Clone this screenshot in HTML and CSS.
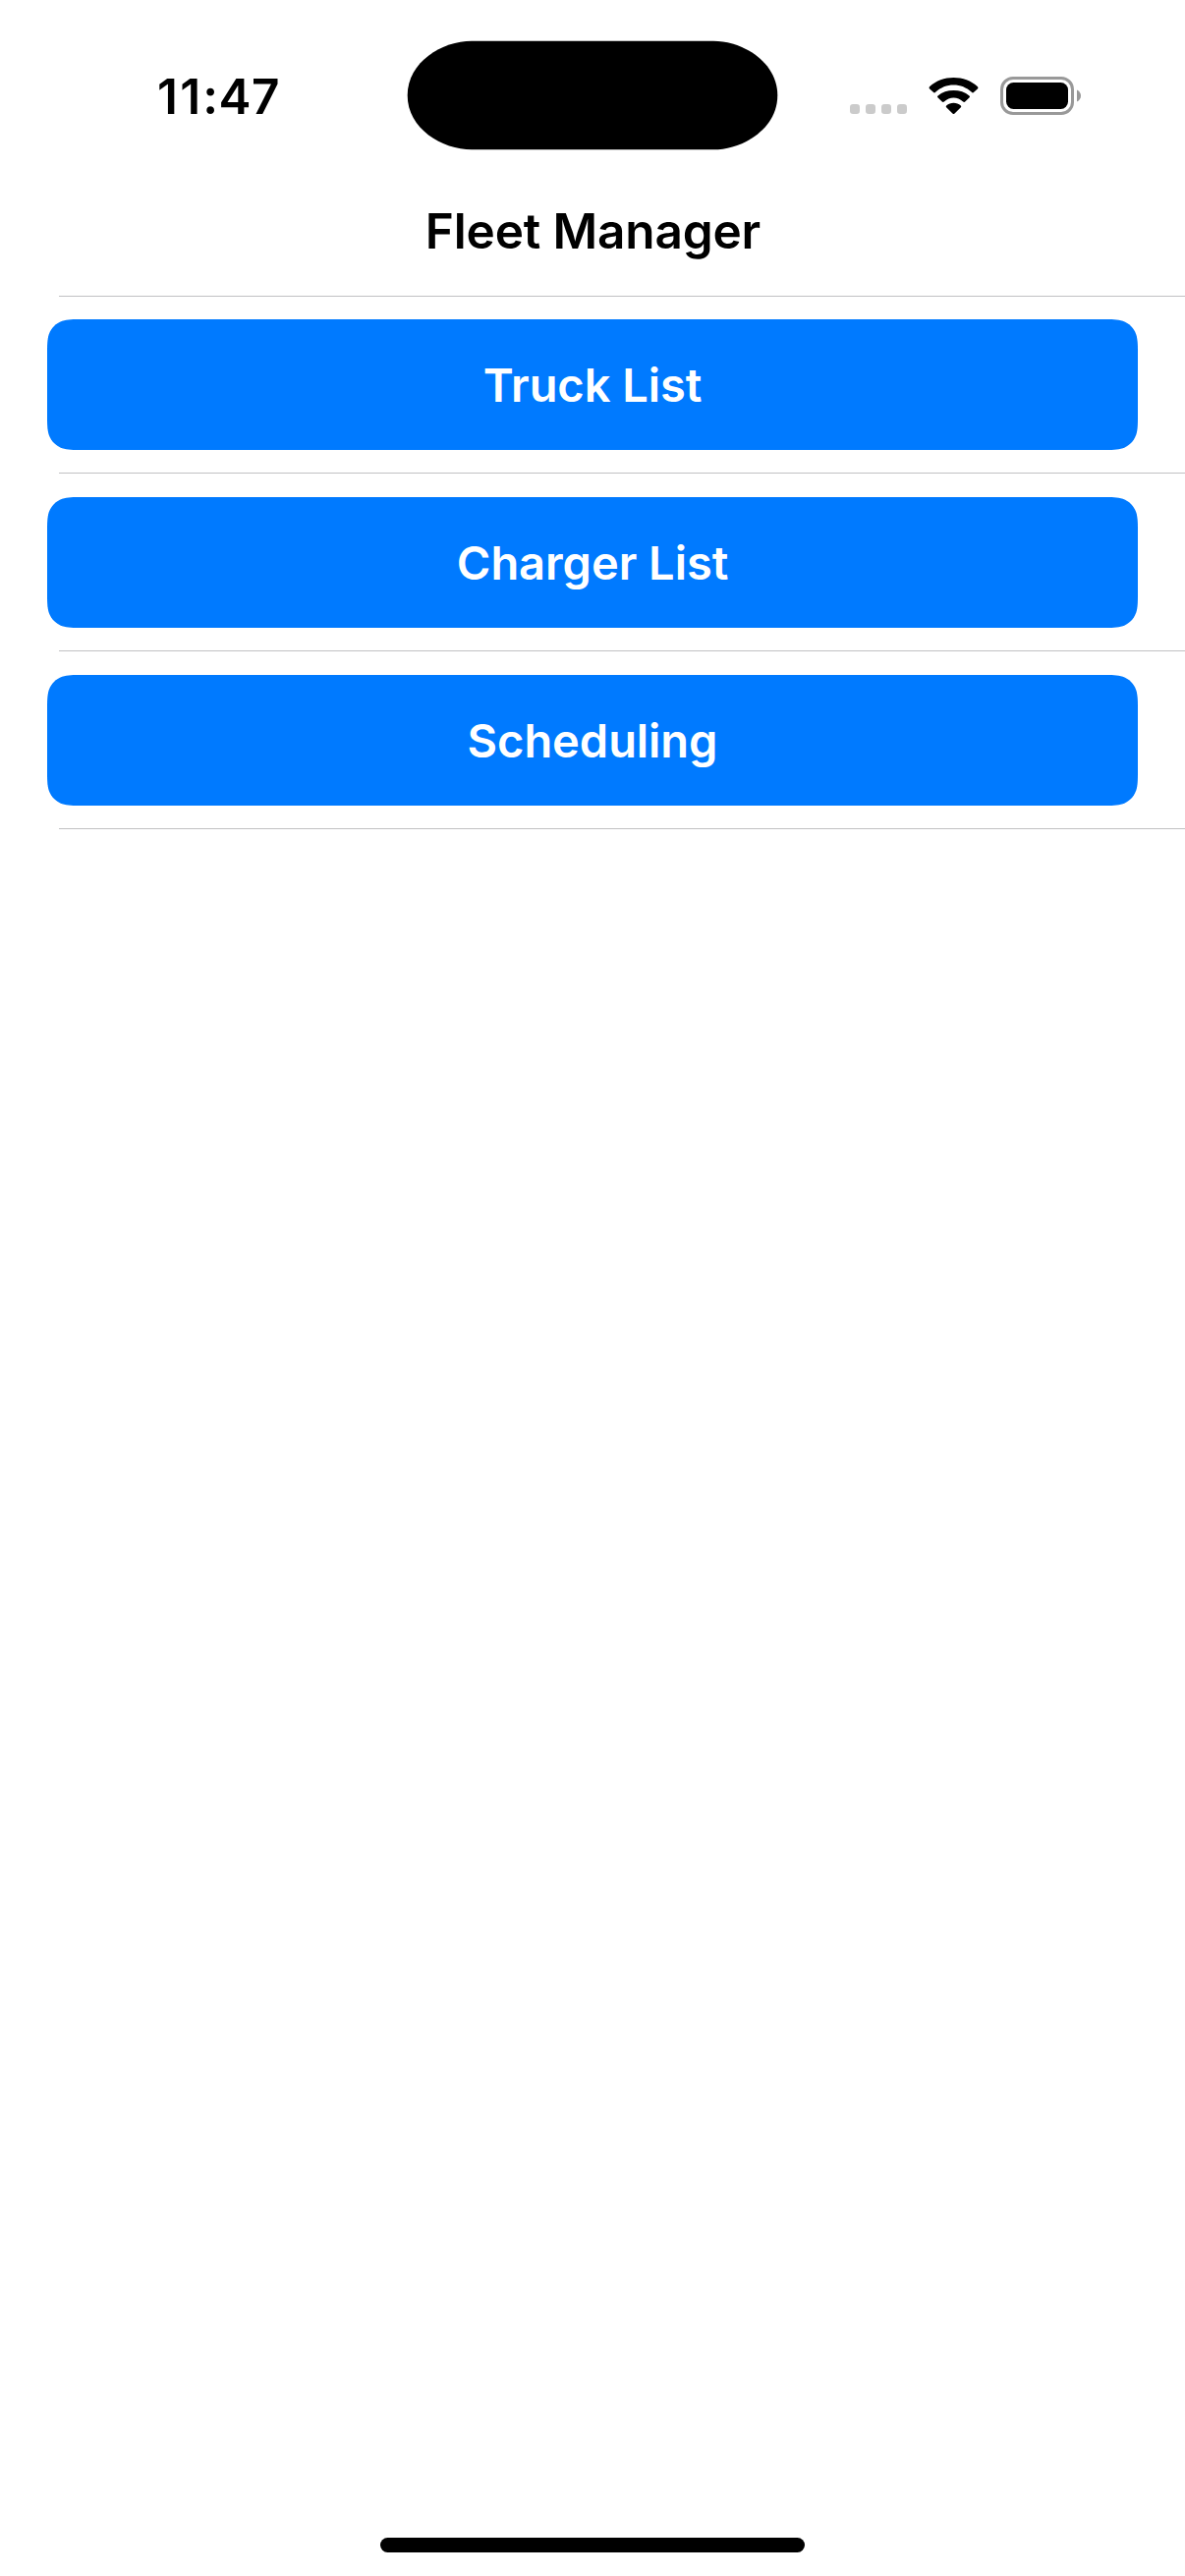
FILE: index.html
```html
<!DOCTYPE html>
<html lang="en">
<head>
<meta charset="utf-8">
<title>Fleet Manager</title>
<link rel="stylesheet" href="styles.css">
</head>
<body>
<div class="screen">
  <header class="status-bar">
    <div class="time"><span class="hour">11</span>:47</div>
    <svg class="island" viewBox="0 0 378 112" aria-hidden="true">
      <path d="M66 .7H312C342 .7 377.3 22 377.3 56S342 111.3 312 111.3H66C36 111.3.7 90 .7 56S36 .7 66 .7Z"/>
    </svg>
    <div class="indicators">
      <svg class="cellular" viewBox="0 0 58 10" aria-hidden="true">
        <rect width="10" height="10" rx="3.2"/><rect x="16" width="10" height="10" rx="3.2"/><rect x="32" width="10" height="10" rx="3.2"/><rect x="48" width="10" height="10" rx="3.2"/>
      </svg>
      <svg class="wifi" viewBox="0 0 51 38" aria-hidden="true">
        <path d="M25.5 7.400C32.400 7.400 38.800 10 43.600 14.500Q44.900 16.100 45.900 15.100L50.100 11.200Q50.900 10.300 50 9.300C43.200 3 34.800 0 25.500 0S7.800 3 1 9.300Q.1 10.300.9 11.200L5.100 15.100Q6.100 16.100 7.400 14.500C12.200 10 18.600 7.400 25.500 7.400Z"/>
        <path d="M25.500 20.400C29.100 20.400 32.300 21.800 34.800 24.200Q36.200 25.600 37.200 24.600L41.600 20.300Q42.500 19.300 41.500 18.400C37.100 14.700 31.600 12.900 25.500 12.900S13.900 14.700 9.500 18.400Q8.500 19.300 9.400 20.300L13.800 24.600Q14.800 25.600 16.200 24.200C18.700 21.800 21.900 20.400 25.500 20.400Z"/>
        <path d="M26.300 36.700L32.900 30.200Q33.800 29.300 32.800 28.500C30.700 26.700 28.300 25.700 25.500 25.700S20.300 26.700 18.200 28.500Q17.200 29.300 18.100 30.200L24.700 36.700Q25.500 37.400 26.300 36.700Z"/>
      </svg>
      <svg class="battery" viewBox="0 0 82 39" aria-hidden="true">
        <rect class="battery-shell" x="1.500" y="1.500" width="72" height="36" rx="11.500"/>
        <rect x="6" y="6" width="63" height="27" rx="7.500"/>
        <path class="battery-cap" d="M78 13.500C80.500 14.500 82 16.900 82 19.500S80.500 24.500 78 25.500Z"/>
      </svg>
    </div>
  </header>
  <h1 class="title">Fleet Manager</h1>
  <nav class="menu">
    <div class="row"><button class="action">Truck List</button></div>
    <div class="row"><button class="action">Charger List</button></div>
    <div class="row"><button class="action">Scheduling</button></div>
  </nav>
  <div class="home-indicator"></div>
</div>
</body>
</html>
```
FILE: styles.css
```css
* { box-sizing: border-box; }

body {
  margin: 0;
  background: #fff;
  color: #000;
  font-family: Inter, "Liberation Sans", sans-serif;
}

.screen {
  display: flex;
  flex-direction: column;
  width: 1206px;
  height: 2622px;
}

.status-bar {
  display: grid;
  grid-template-columns: 414px 378px 414px;
  align-items: start;
  height: 177px;
  padding-top: 41px;
}

.time {
  padding: 27px 0 0 160px;
  font-size: 49.5px;
  font-weight: 600;
  line-height: 60px;
  letter-spacing: .5px;
}

.hour { letter-spacing: 2.2px; }

.island {
  display: block;
  width: 378px;
  height: 112px;
}

.indicators {
  display: flex;
  padding: 37px 0 0 73px;
}

.cellular {
  width: 58px;
  height: 10px;
  margin-top: 28px;
  fill: #cbcbcb;
}

.wifi {
  width: 51px;
  height: 38px;
  margin: 1px 22px 0 22px;
}

.battery {
  width: 82px;
  height: 39px;
}

.battery-shell {
  fill: none;
  stroke: #999;
  stroke-width: 3;
}

.battery-cap { fill: #999; }

.title {
  margin: 0;
  height: 124px;
  padding: 28px 0 0 1px;
  font-size: 49.5px;
  font-weight: 600;
  line-height: 60px;
  letter-spacing: -.15px;
  text-align: center;
}

.menu {
  --separator: linear-gradient(#c1c1c3, #c1c1c3);
  display: flex;
  flex-direction: column;
}

.row {
  height: 181px;
  padding: 25px 48px 0;
  background: var(--separator) 60px 0 / 1146px 1px no-repeat;
}

.row:first-child {
  height: 180px;
  padding-top: 24px;
}

.row:last-child {
  height: 182px;
  background:
    var(--separator) 60px 0 / 1146px 1px no-repeat,
    var(--separator) 60px 181px / 1146px 1px no-repeat;
}

.action {
  display: block;
  width: 1110px;
  height: 133px;
  padding: 1px 0 0;
  border: 0;
  background: #007aff;
  color: #fff;
  font: 600 47px/60px Inter, "Liberation Sans", sans-serif;
  letter-spacing: -.05px;
  /* continuous-curvature corners, 24px radius */
  clip-path: path("M36.700 0H1073.300C1083.900 0 1089.200 0 1094.800 1.800C1101.100 4.100 1105.900 8.900 1108.200 15.200C1110 20.800 1110 26.100 1110 36.700V96.300C1110 106.900 1110 112.200 1108.200 117.800C1105.900 124.100 1101.100 128.900 1094.800 131.200C1089.200 133 1083.900 133 1073.300 133H36.700C26.100 133 20.800 133 15.200 131.200C8.900 128.900 4.100 124.100 1.800 117.800C0 112.200 0 106.900 0 96.300V36.700C0 26.100 0 20.800 1.800 15.200C4.100 8.900 8.900 4.100 15.200 1.800C20.800 0 26.100 0 36.700 0Z");
}

.home-indicator {
  width: 432px;
  height: 15px;
  margin: auto auto 24px 387px;
  border-radius: 8px;
  background: #000;
}
```
